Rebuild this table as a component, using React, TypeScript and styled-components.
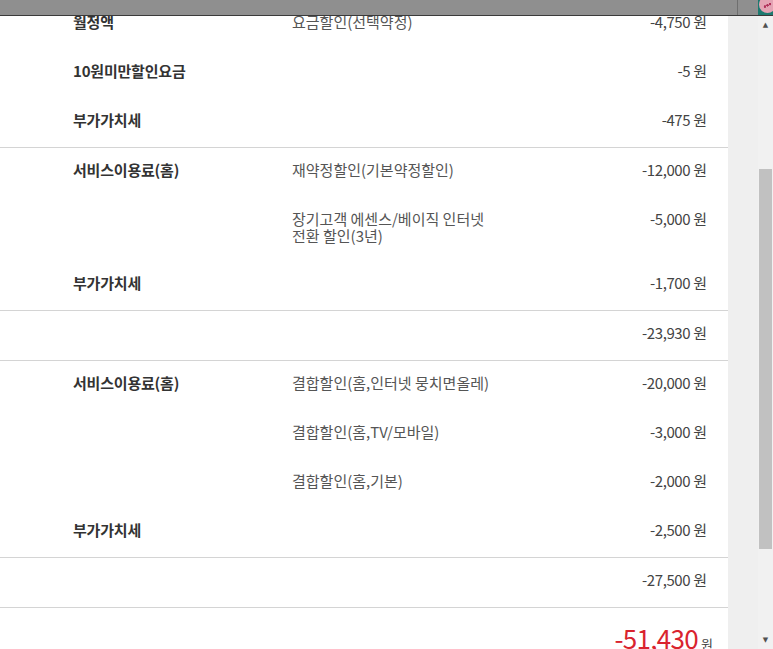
import React from 'react';
import styled, { createGlobalStyle } from 'styled-components';

const GlobalStyle = createGlobalStyle`
  html, body {
    margin: 0;
    padding: 0;
    background: #fff;
  }
  body {
    font-family: "Noto Sans CJK KR", "Noto Sans", "Liberation Sans", sans-serif;
    color: #333;
  }
`;

type Line = { label?: string; desc?: string[]; amount: string };
type Group = { lines: Line[] };

const groups: Group[] = [
  {
    lines: [
      { label: '월정액', desc: ['요금할인(선택약정)'], amount: '-4,750' },
      { label: '10원미만할인요금', amount: '-5' },
      { label: '부가가치세', amount: '-475' },
    ],
  },
  {
    lines: [
      { label: '서비스이용료(홈)', desc: ['재약정할인(기본약정할인)'], amount: '-12,000' },
      { desc: ['장기고객 에센스/베이직 인터넷', '전환 할인(3년)'], amount: '-5,000' },
      { label: '부가가치세', amount: '-1,700' },
    ],
  },
  { lines: [{ amount: '-23,930' }] },
  {
    lines: [
      { label: '서비스이용료(홈)', desc: ['결합할인(홈,인터넷 뭉치면올레)'], amount: '-20,000' },
      { desc: ['결합할인(홈,TV/모바일)'], amount: '-3,000' },
      { desc: ['결합할인(홈,기본)'], amount: '-2,000' },
      { label: '부가가치세', amount: '-2,500' },
    ],
  },
  { lines: [{ amount: '-27,500' }] },
];

const App: React.FC = () => {
  return (
    <>
      <GlobalStyle />
      <Window>
        <TopBar>
          <TabEdge />
          <Badge>
            <BadgeDot />
          </Badge>
        </TopBar>
        <Layout>
          <Content>
            {groups.map((g, gi) => (
              <Section key={gi}>
                {g.lines.map((l, li) => (
                  <Row key={li} $multi={(l.desc?.length ?? 0) > 1}>
                    <Label>{l.label}</Label>
                    <Desc>
                      {l.desc?.map((d, di) => (
                        <DescLine key={di}>{d}</DescLine>
                      ))}
                    </Desc>
                    <Amount>
                      {l.amount} <Won>원</Won>
                    </Amount>
                  </Row>
                ))}
              </Section>
            ))}
            <TotalRow>
              <TotalValue>-51,430</TotalValue>
              <TotalWon>원</TotalWon>
            </TotalRow>
          </Content>
          <Side>
            <ScrollBar>
              <Arrow>▲</Arrow>
              <Track>
                <Thumb style={{ marginTop: 135, height: 380 }} />
              </Track>
              <Arrow>▼</Arrow>
            </ScrollBar>
          </Side>
        </Layout>
      </Window>
    </>
  );
};

const Window = styled.div`
  position: relative;
  width: 773px;
  height: 649px;
  overflow: hidden;
`;

const TopBar = styled.div`
  position: absolute;
  top: 0;
  left: 0;
  right: 0;
  height: 15px;
  background: #8f8f8f;
  border-bottom: 1px solid #3a3a3a;
  display: flex;
  justify-content: flex-end;
  z-index: 2;
`;

const TabEdge = styled.div`
  width: 20px;
  border-left: 1px solid #6f6f6f;
`;

const Badge = styled.div`
  width: 15px;
  background: #1d7a70;
  display: flex;
  align-items: flex-start;
  justify-content: flex-start;
  overflow: hidden;
`;

const BadgeDot = styled.div`
  flex: none;
  width: 17px;
  height: 17px;
  margin: -4px 0 0 1px;
  border-radius: 50%;
  background:
    radial-gradient(circle at 35% 62%, #b0305a 0 1px, transparent 1.5px),
    radial-gradient(circle at 50% 55%, #b0305a 0 1px, transparent 1.5px),
    radial-gradient(circle at 65% 48%, #b0305a 0 1px, transparent 1.5px),
    #e4a3b4;
`;

const Layout = styled.div`
  display: flex;
  height: 100%;
`;

const Content = styled.div`
  width: 728px;
  background: #fff;
`;

const Section = styled.div`
  border-bottom: 1px solid #d4d4d4;
`;

const Row = styled.div<{ $multi?: boolean }>`
  display: grid;
  grid-template-columns: 219px 1fr auto;
  padding: 13px 21px ${(p) => (p.$multi ? 17 : 19)}px 73px;
  font-size: 15px;
  line-height: 17px;
`;

const Label = styled.div`
  font-weight: 700;
  color: #333;
  letter-spacing: -0.2px;
`;

const Desc = styled.div`
  color: #555;
`;

const DescLine = styled.div`
  height: 17px;
  overflow: visible;
`;

const Amount = styled.div`
  color: #444;
  text-align: right;
  letter-spacing: -0.4px;
  white-space: nowrap;
`;

const Won = styled.span`
  letter-spacing: 0;
`;

const TotalRow = styled.div`
  display: flex;
  justify-content: flex-end;
  align-items: baseline;
  gap: 3px;
  padding: 15px 15px 0 0;
`;

const TotalValue = styled.span`
  font-size: 26px;
  line-height: 30px;
  color: #d9232e;
  letter-spacing: -0.7px;
`;

const TotalWon = styled.span`
  font-size: 13px;
  color: #444;
`;

const Side = styled.div`
  flex: 1;
  background: #efefef;
  display: flex;
  justify-content: flex-end;
  padding-top: 16px;
`;

const ScrollBar = styled.div`
  width: 15px;
  display: flex;
  flex-direction: column;
  align-items: center;
  background: #f1f1f1;
`;

const Arrow = styled.div`
  height: 18px;
  font-size: 7px;
  line-height: 18px;
  color: #505050;
  font-family: "DejaVu Sans", sans-serif;
`;

const Track = styled.div`
  flex: 1;
  width: 100%;
  display: flex;
  flex-direction: column;
  align-items: center;
`;

const Thumb = styled.div`
  width: 13px;
  background: #c1c1c1;
`;

export default App;
